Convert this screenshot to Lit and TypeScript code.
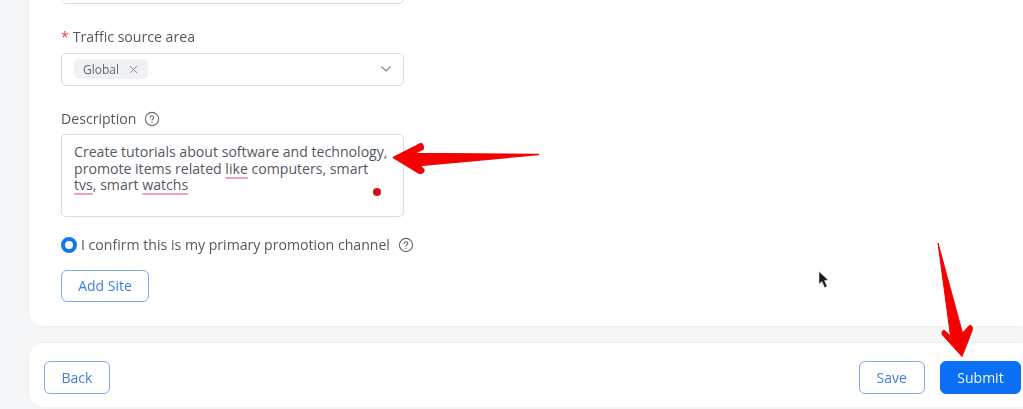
import { LitElement, html, css, svg } from "lit";
import { customElement } from "lit/decorators.js";

const help = html`<svg class="help" width="16" height="16" viewBox="0 0 16 16" fill="none">
  <circle cx="8" cy="8" r="6.6" stroke="#666a70" stroke-width="1.1"/>
  <path d="M6.200 6.400c0-1 .8-1.700 1.800-1.700s1.800.7 1.800 1.600c0 1.400-1.800 1.400-1.800 2.800" stroke="#666a70" stroke-width="1.100" stroke-linecap="round"/>
  <circle cx="8" cy="11.200" r=".7" fill="#666a70"/>
</svg>`;

@customElement("app-root")
export class AppRoot extends LitElement {
  static styles = css`
    :host {
      display: block;
      position: relative;
      height: 409px;
      overflow: hidden;
      background: #f5f6f8;
      font-family: "Open Sans", "Liberation Sans", sans-serif;
      font-size: 14.12px;
      color: #55595f;
    }
    .page {
      display: flex;
      flex-direction: column;
      gap: 17px;
      padding-left: 29px;
      margin-top: -40px;
      filter: blur(0.35px);
    }
    .card {
      background: #fff;
      border-radius: 14px 0 0 14px;
      box-shadow: 0 0 2px rgba(30, 40, 60, 0.08);
    }
    .form {
      height: 366px;
      padding-left: 32px;
      display: flex;
      flex-direction: column;
      align-items: flex-start;
    }
    .box {
      box-sizing: border-box;
      width: 343px;
      border: 1.5px solid #d9dce1;
      border-radius: 5px;
      background: #fff;
    }
    .first { height: 44px; }
    .label {
      height: 20px;
      line-height: 20px;
      display: flex;
      align-items: center;
    }
    .l1 { margin-top: 23px; margin-bottom: 6px; }
    .l2 { margin-top: 23px; margin-bottom: 5.5px; gap: 8px; }
    .req { color: #ee3b3b; margin-right: 4px; }
    .select {
      height: 32.5px;
      display: flex;
      align-items: center;
      justify-content: space-between;
      padding: 0 11px 0 12px;
    }
    .tag {
      display: flex;
      align-items: center;
      gap: 10px;
      height: 20px;
      padding: 0 10px 0 9px;
      background: #eff1f4;
      border-radius: 5px;
      font-size: 12px;
      color: #62666c;
    }
    .area {
      height: 83px;
      padding: 9px 12px;
      line-height: 16.5px;
      position: relative;
    }
    .sp {
      text-decoration: underline;
      text-decoration-color: #f0a3b8;
      text-decoration-thickness: 2px;
      text-underline-offset: 3px;
    }
    .dot {
      position: absolute;
      left: 311px;
      top: 53px;
      width: 8px;
      height: 8px;
      border-radius: 50%;
      background: #d50f0f;
    }
    .confirm {
      margin-top: 19.500px;
      height: 16px;
      display: flex;
      align-items: center;
    }
    .radio {
      box-sizing: border-box;
      width: 16px;
      height: 16px;
      border: 4.5px solid #1473f0;
      border-radius: 50%;
      margin-right: 4px;
    }
    .confirm .help { margin-left: 8px; }
    .btn {
      box-sizing: border-box;
      height: 32.5px;
      border: 1.5px solid #7fa9e6;
      border-radius: 6px;
      background: #fff;
      color: #3f7fdc;
      font: 14px "Open Sans", "Liberation Sans", sans-serif;
      padding: 0;
    }
    .add { width: 88px; margin-top: 17px; }
    .footer {
      height: 64px;
      display: flex;
      align-items: center;
      justify-content: space-between;
      padding: 4.5px 2px 0 15px;
      box-sizing: border-box;
    }
    .back { width: 66px; }
    .actions { display: flex; gap: 15.500px; }
    .save { width: 65.500px; }
    .submit {
      width: 81px;
      background: #0b6ff5;
      border-color: #0b6ff5;
      color: #f2f7ff;
    }
    .overlay {
      position: absolute;
      left: 0;
      top: 0;
      pointer-events: none;
    }
  `;

  render() {
    return html`
      <div class="page">
        <div class="card form">
          <div class="box first"></div>
          <div class="label l1"><span class="req">*</span>Traffic source area</div>
          <div class="box select">
            <span class="tag">Global
              <svg width="9" height="9" viewBox="0 0 9 9"><path d="M1 1l7 7M8 1L1 8" stroke="#85898f" stroke-width="1"/></svg>
            </span>
            <svg width="12" height="8" viewBox="0 0 12 8" fill="none"><path d="M1.500 1.500L6 6l4.500-4.500" stroke="#7d8187" stroke-width="1.100"/></svg>
          </div>
          <div class="label l2">Description ${help}</div>
          <div class="box area">
            Create tutorials about software and technology,<br />
            promote items related <span class="sp">like</span> computers, smart<br />
            <span class="sp">tvs</span>, smart <span class="sp">watchs</span>
            <span class="dot"></span>
          </div>
          <div class="confirm">
            <span class="radio"></span>I confirm this is my primary promotion channel ${help}
          </div>
          <button class="btn add">Add Site</button>
        </div>
        <div class="card footer">
          <button class="btn back">Back</button>
          <div class="actions">
            <button class="btn save">Save</button>
            <button class="btn submit">Submit</button>
          </div>
        </div>
      </div>
      <svg class="overlay" width="1023" height="409" viewBox="0 0 1023 409">
        ${svg`
          <path d="M393.500 157.500L421 143.500Q424 145 423 149L414 153.500L538.500 154.500L420 165.500L424 170Q423 174 419 173Z" fill="#f40000" stroke="#f40000" stroke-width="1.500" stroke-linejoin="round"/>
          <path d="M938 243L962.500 333L970 325Q973.500 326 972 331L962 356.500L942.500 335Q941 331 944 330L950.500 336Z" fill="#f40000" stroke="#f40000" stroke-width="1" stroke-linejoin="round"/>
          <path d="M819 271.500L819 284L822 281.500L824.500 287.500L827 286.500L824.500 280.500L828 280Z" fill="#1a1a1a" stroke="#dddddd" stroke-width=".5"/>
        `}
      </svg>
    `;
  }
}
